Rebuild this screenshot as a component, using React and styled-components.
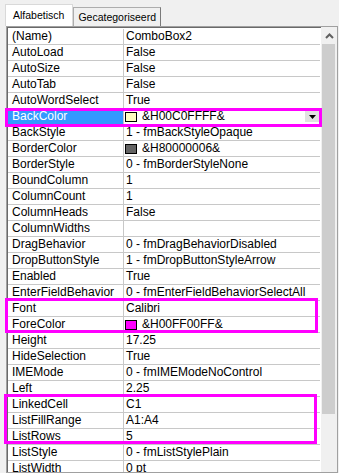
import React from "react";
import styled, { createGlobalStyle } from "styled-components";

const GlobalStyle = createGlobalStyle`
  body {
    margin: 0;
    background: #f0f0f0;
    font-family: "Liberation Sans", Arial, sans-serif;
    font-size: 12px;
    color: #000;
  }
`;

const Window = styled.div`
  width: 339px;
  height: 473px;
  overflow: hidden;
  background: #f0f0f0;
`;

const TabStrip = styled.div`
  display: flex;
  align-items: flex-end;
  height: 26px;
  padding-left: 5px;
`;

const Tab = styled.div`
  box-sizing: border-box;
  height: ${({ $active }) => ($active ? "22px" : "19px")};
  padding: ${({ $active }) => ($active ? "3px 8px 0 7px" : "2px 4px 0 4px")};
  font-size: 10.5px;
  line-height: 15px;
  background: ${({ $active }) => ($active ? "#ffffff" : "#f0f0f0")};
  border: 1px solid ${({ $active }) => ($active ? "#d9d9d9" : "#adadad")};
  border-bottom: none;
  border-right-color: ${({ $active }) => ($active ? "#d9d9d9" : "#7a7a7a")};
  white-space: nowrap;
`;

const Grid = styled.div`
  position: relative;
  box-sizing: border-box;
  display: flex;
  width: 332px;
  height: 447px;
  margin-left: 6px;
  border: 1px solid #a0a0a0;
  box-shadow: inset 1px 1px 0 #696969;
  background: #ffffff;
`;

const Rows = styled.div`
  width: 313px;
  padding: 2px 0 0 1px;
  overflow: hidden;
`;

const Row = styled.div`
  display: flex;
  box-sizing: border-box;
  height: 16px;
  border-bottom: 1px solid #c8c8c8;
  line-height: 15px;
`;

const NameCell = styled.div`
  box-sizing: border-box;
  width: 116px;
  padding-left: 4px;
  border-right: 1px solid #c8c8c8;
  white-space: nowrap;
  overflow: hidden;
  background: ${({ $selected }) => ($selected ? "#3399ff" : "transparent")};
  color: ${({ $selected }) => ($selected ? "#ffffff" : "#000000")};
`;

const ValueCell = styled.div`
  flex: 1;
  display: flex;
  align-items: center;
  padding-left: 2px;
  white-space: nowrap;
  overflow: hidden;
`;

const Swatch = styled.span`
  box-sizing: border-box;
  width: 12px;
  height: 10px;
  margin: 0 5px 0 -1px;
  border: 1px solid #000;
  background: ${({ $color }) => $color};
`;

const DropButton = styled.span`
  display: flex;
  align-items: center;
  justify-content: center;
  width: 14px;
  height: 11px;
  margin-left: auto;
  margin-right: 1px;
  background: #e1e1e1;
`;

const Scrollbar = styled.div`
  display: flex;
  flex-direction: column;
  width: 16px;
  margin-left: 1px;
  background: #f0f0f0;
`;

const ScrollButton = styled.div`
  display: flex;
  align-items: center;
  justify-content: center;
  height: 17px;
`;

const Thumb = styled.div`
  height: 370px;
  margin: 0 2px 0 1px;
  background: #cdcdcd;
`;

const Highlight = styled.div`
  position: absolute;
  box-sizing: border-box;
  border: 3px solid #ff00ff;
  pointer-events: none;
`;

const properties = [
  ["(Name)", "ComboBox2"],
  ["AutoLoad", "False"],
  ["AutoSize", "False"],
  ["AutoTab", "False"],
  ["AutoWordSelect", "True"],
  ["BackColor", "&H00C0FFFF&", "#ffffc0", true],
  ["BackStyle", "1 - fmBackStyleOpaque"],
  ["BorderColor", "&H80000006&", "#646464"],
  ["BorderStyle", "0 - fmBorderStyleNone"],
  ["BoundColumn", "1"],
  ["ColumnCount", "1"],
  ["ColumnHeads", "False"],
  ["ColumnWidths", ""],
  ["DragBehavior", "0 - fmDragBehaviorDisabled"],
  ["DropButtonStyle", "1 - fmDropButtonStyleArrow"],
  ["Enabled", "True"],
  ["EnterFieldBehavior", "0 - fmEnterFieldBehaviorSelectAll"],
  ["Font", "Calibri"],
  ["ForeColor", "&H00FF00FF&", "#ff00ff"],
  ["Height", "17.25"],
  ["HideSelection", "True"],
  ["IMEMode", "0 - fmIMEModeNoControl"],
  ["Left", "2.25"],
  ["LinkedCell", "C1"],
  ["ListFillRange", "A1:A4"],
  ["ListRows", "5"],
  ["ListStyle", "0 - fmListStylePlain"],
  ["ListWidth", "0 pt"],
];

// highlight boxes drawn over the grid, in px relative to its inner box
const highlights = [
  { left: -2, top: 81, width: 317, height: 19 },
  { left: -2, top: 271, width: 313, height: 35 },
  { left: -3, top: 367, width: 313, height: 50 },
];

function App() {
  return (
    <Window>
      <GlobalStyle />
      <TabStrip>
        <Tab $active>Alfabetisch</Tab>
        <Tab>Gecategoriseerd</Tab>
      </TabStrip>
      <Grid>
        <Rows>
          {properties.map(([name, value, color, selected]) => (
            <Row key={name}>
              <NameCell $selected={selected}>{name}</NameCell>
              <ValueCell>
                {color && <Swatch $color={color} />}
                {value}
                {selected && (
                  <DropButton>
                    <svg width="7" height="4" viewBox="0 0 7 4">
                      <path d="M0 0h7L3.5 4z" fill="#000" />
                    </svg>
                  </DropButton>
                )}
              </ValueCell>
            </Row>
          ))}
        </Rows>
        <Scrollbar>
          <ScrollButton>
            <svg width="9" height="6" viewBox="0 0 9 6">
              <path d="M1 5l3.5-3.5L8 5" fill="none" stroke="#606060" strokeWidth="2" />
            </svg>
          </ScrollButton>
          <Thumb />
        </Scrollbar>
        {highlights.map((h, i) => (
          <Highlight key={i} style={{ left: h.left, top: h.top, width: h.width, height: h.height }} />
        ))}
      </Grid>
    </Window>
  );
}

export default App;
